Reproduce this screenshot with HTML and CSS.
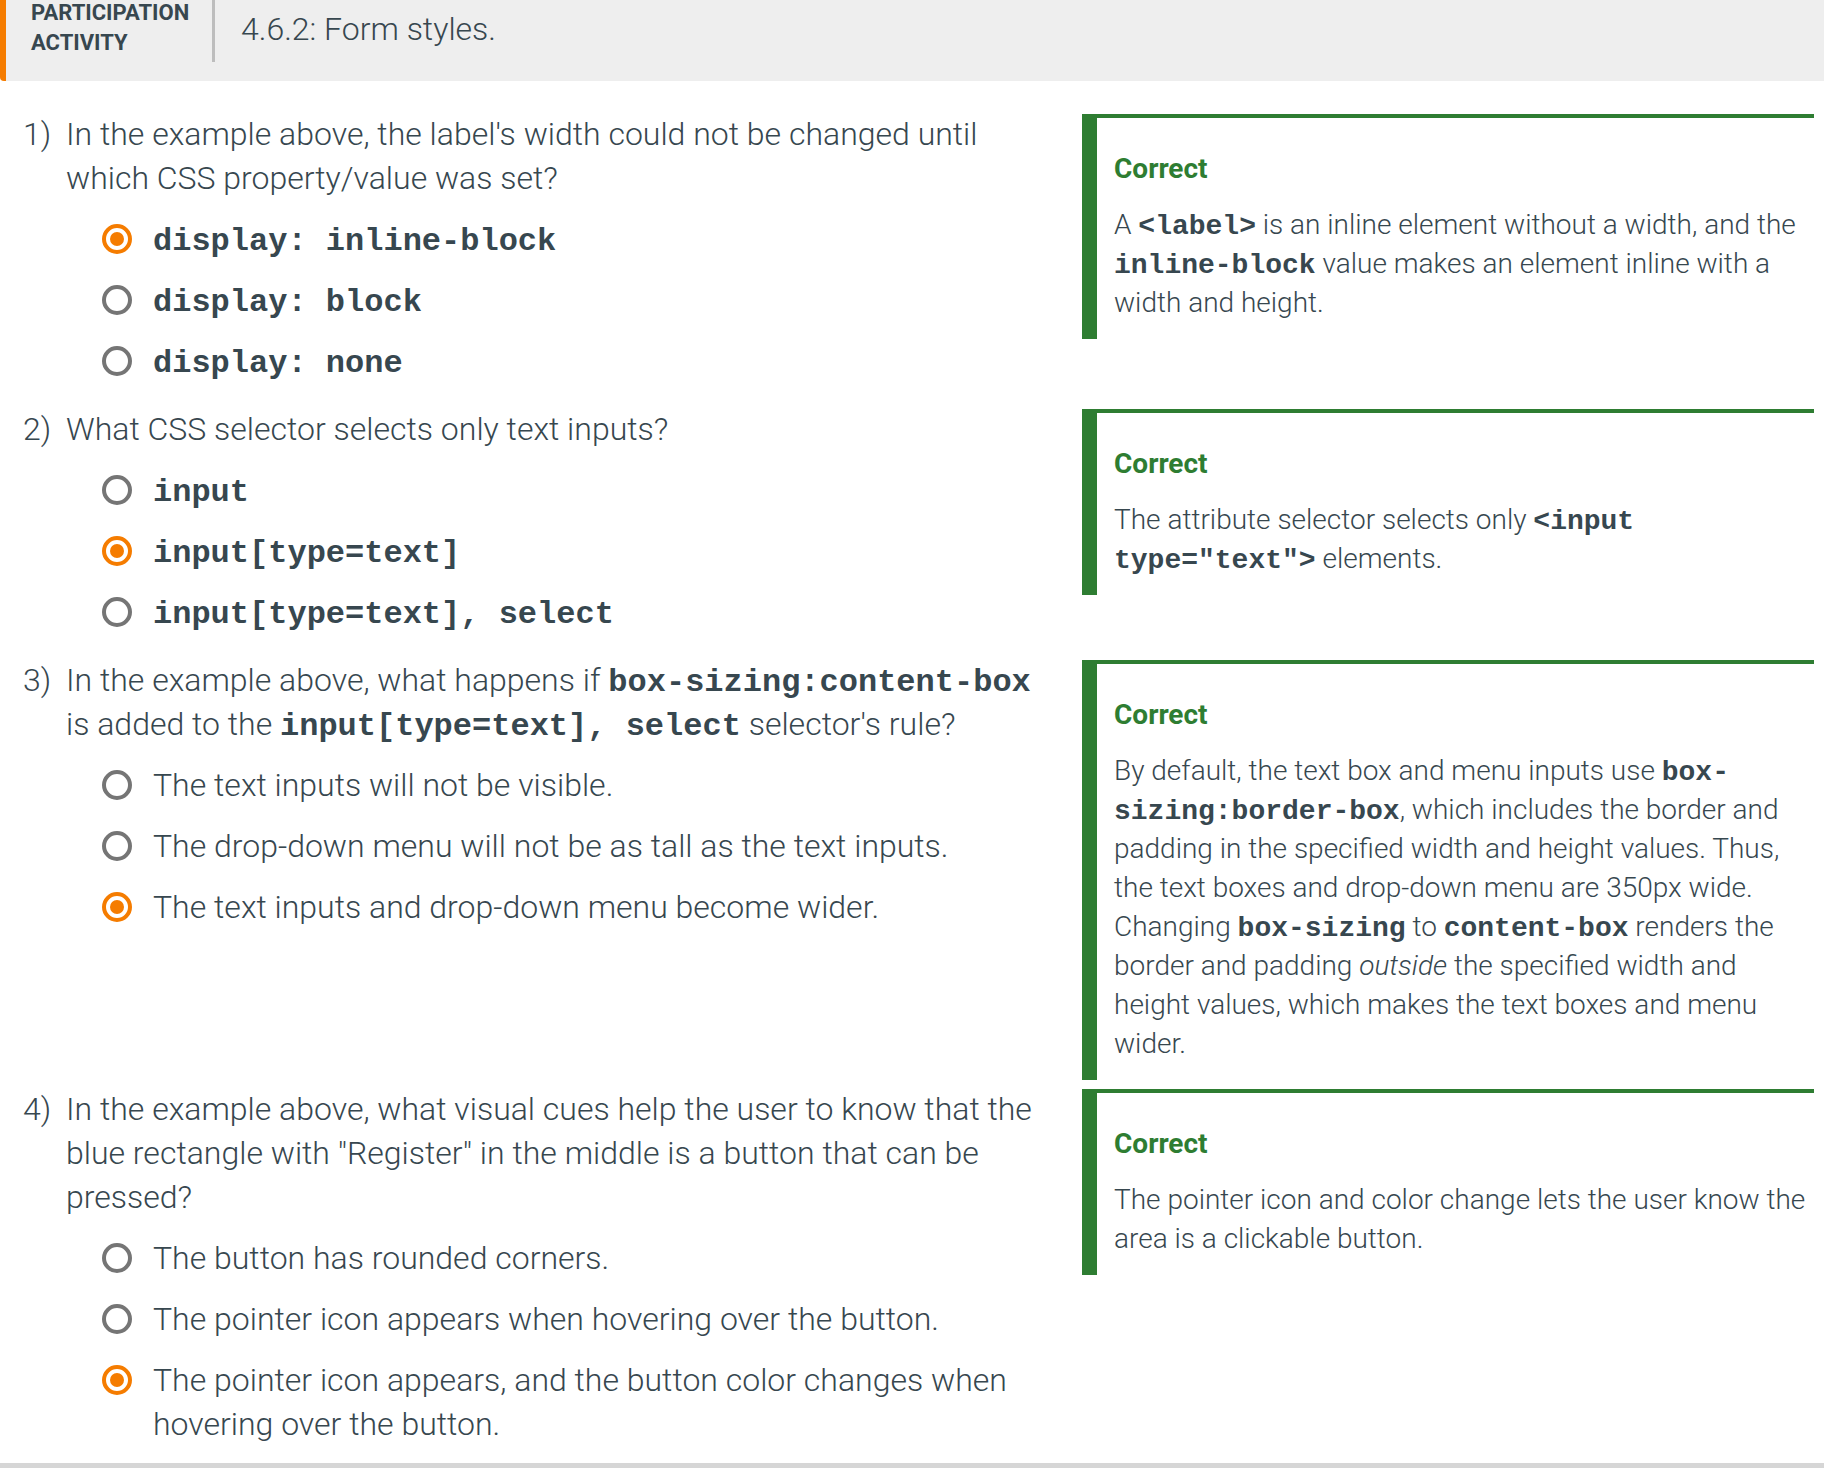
FILE: index.html
```html
<!DOCTYPE html>
<html lang="en">
<head>
<meta charset="utf-8">
<title>4.6.2: Form styles.</title>
<link rel="stylesheet" href="styles.css">
</head>
<body>
<div class="activity">
  <div class="header">
    <div class="label"><div class="label-text">PARTICIPATION<br>ACTIVITY</div></div>
    <div class="title">4.6.2: Form styles.</div>
  </div>
  <div class="questions">
    <div class="row">
      <div class="question">
        <div class="prompt"><span class="num">1)</span><div class="prompt-text">In the example above, the label's width could not be changed until which CSS property/value was set?</div></div>
        <div class="options">
          <div class="option"><span class="radio selected"></span><span class="opt-text"><code>display: inline-block</code></span></div>
          <div class="option"><span class="radio"></span><span class="opt-text"><code>display: block</code></span></div>
          <div class="option"><span class="radio"></span><span class="opt-text"><code>display: none</code></span></div>
        </div>
      </div>
      <div class="feedback">
        <div class="fb-title">Correct</div>
        <div class="fb-text">A <code>&lt;label&gt;</code> is an inline element without a width, and the <code>inline-block</code> value makes an element inline with a width and height.</div>
      </div>
    </div>
    <div class="row">
      <div class="question">
        <div class="prompt"><span class="num">2)</span><div class="prompt-text">What CSS selector selects only text inputs?</div></div>
        <div class="options">
          <div class="option"><span class="radio"></span><span class="opt-text"><code>input</code></span></div>
          <div class="option"><span class="radio selected"></span><span class="opt-text"><code>input[type=text]</code></span></div>
          <div class="option"><span class="radio"></span><span class="opt-text"><code>input[type=text], select</code></span></div>
        </div>
      </div>
      <div class="feedback">
        <div class="fb-title">Correct</div>
        <div class="fb-text">The attribute selector selects only <code>&lt;input type="text"&gt;</code> elements.</div>
      </div>
    </div>
    <div class="row">
      <div class="question">
        <div class="prompt"><span class="num">3)</span><div class="prompt-text">In the example above, what happens if <code>box-sizing:content-box</code> is added to the <code>input[type=text], select</code> selector's rule?</div></div>
        <div class="options">
          <div class="option"><span class="radio"></span><span class="opt-text">The text inputs will not be visible.</span></div>
          <div class="option"><span class="radio"></span><span class="opt-text">The drop-down menu will not be as tall as the text inputs.</span></div>
          <div class="option"><span class="radio selected"></span><span class="opt-text">The text inputs and drop-down menu become wider.</span></div>
        </div>
      </div>
      <div class="feedback">
        <div class="fb-title">Correct</div>
        <div class="fb-text">By default, the text box and menu inputs use <code>box-sizing:border-box</code>, which includes the border and padding in the specified width and height values. Thus, the text boxes and drop-down menu are 350px wide. Changing <code>box-sizing</code> to <code>content-box</code> renders the border and padding <em>outside</em> the specified width and height values, which makes the text boxes and menu wider.</div>
      </div>
    </div>
    <div class="row">
      <div class="question">
        <div class="prompt"><span class="num">4)</span><div class="prompt-text">In the example above, what visual cues help the user to know that the blue rectangle with "Register" in the middle is a button that can be pressed?</div></div>
        <div class="options">
          <div class="option"><span class="radio"></span><span class="opt-text">The button has rounded corners.</span></div>
          <div class="option"><span class="radio"></span><span class="opt-text">The pointer icon appears when hovering over the button.</span></div>
          <div class="option"><span class="radio selected"></span><span class="opt-text">The pointer icon appears, and the button color changes when hovering over the button.</span></div>
        </div>
      </div>
      <div class="feedback">
        <div class="fb-title">Correct</div>
        <div class="fb-text">The pointer icon and color change lets the user know the area is a clickable button.</div>
      </div>
    </div>
  </div>
</div>
</body>
</html>
```

FILE: styles.css
```css
* { box-sizing: border-box; }

html, body {
  margin: 0;
  padding: 0;
  background: #ffffff;
}

body {
  font-family: Roboto, "Liberation Sans", sans-serif;
  color: #37474f;
}

code {
  font-family: "Liberation Mono", "Courier New", monospace;
  font-weight: 700;
  line-height: 1;
}

.activity {
  width: 1824px;
  border-bottom: 5px solid #d6d6d6;
  box-shadow: 0 2px 2px rgba(0, 0, 0, 0.06);
}

/* Header */
.header {
  display: flex;
  align-items: flex-start;
  height: 81px;
  background: #eeeeee;
  border-left: 6px solid #f57c00;
  border-bottom-left-radius: 4px;
}

.label {
  width: 209px;
  height: 62px;
  padding-left: 25px;
  border-right: 3px solid #bdbdbd;
}

.label-text {
  margin-top: -2px;
  font-size: 22px;
  line-height: 30px;
  font-weight: 700;
  color: #37474f;
}

.title {
  padding-left: 26px;
  font-size: 32px;
  line-height: 58px;
  font-weight: 300;
  color: #37474f;
}

/* Questions */
.questions {
  padding-top: 33px;
}

.row {
  display: flex;
  align-items: flex-start;
  margin-bottom: 9px;
}

.row:last-child {
  margin-bottom: 0;
}

.question {
  flex: 1;
  padding-left: 23px;
  padding-right: 40px;
  padding-bottom: 9px;
  font-size: 32px;
  font-weight: 300;
  line-height: 44px;
}

.row:last-child .question {
  padding-bottom: 9px;
}

.prompt {
  display: flex;
  margin-top: -2px;
}

.num {
  flex: 0 0 43px;
}

.prompt-text {
  flex: 1;
}

.prompt-text code {
  font-size: 32px;
}

.options {
  margin-top: 8px;
  padding-left: 79px;
}

.option {
  display: flex;
  align-items: flex-start;
  padding: 9px 0 8px;
}

.radio {
  position: relative;
  flex: 0 0 30px;
  width: 30px;
  height: 30px;
  margin-top: 7px;
  margin-right: 21px;
  border: 4px solid #757575;
  border-radius: 50%;
}

.radio.selected {
  border-color: #f57c00;
}

.radio.selected::after {
  content: "";
  position: absolute;
  left: 4px;
  top: 4px;
  width: 14px;
  height: 14px;
  border-radius: 50%;
  background: #f57c00;
}

.opt-text {
  flex: 1;
}

.opt-text code {
  font-size: 32px;
}

/* Feedback */
.feedback {
  flex: 0 0 732px;
  margin-right: 10px;
  padding: 31px 8px 17px 17px;
  border-top: 4px solid #2e7d32;
  border-left: 15px solid #2e7d32;
  font-size: 28px;
  line-height: 39px;
  font-weight: 300;
}

.fb-title {
  font-weight: 700;
  color: #2e7d32;
  margin-bottom: 17px;
}

.fb-text code {
  font-size: 28px;
}

.fb-text em {
  font-style: italic;
}
```
